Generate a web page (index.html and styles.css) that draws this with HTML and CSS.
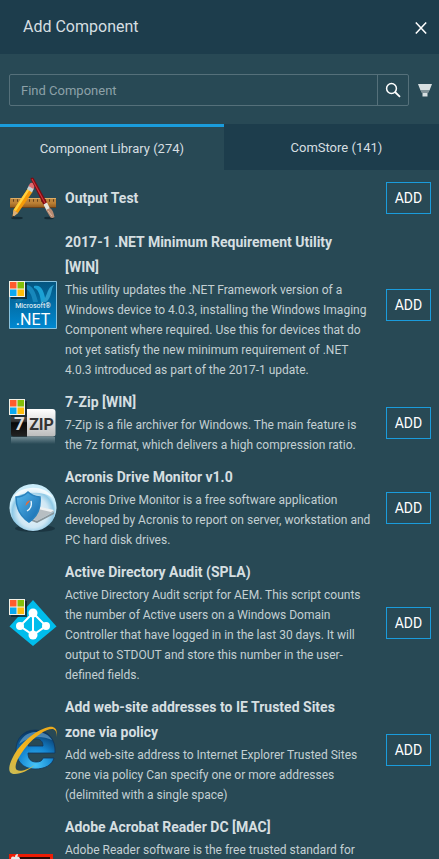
FILE: index.html
```html
<!DOCTYPE html>
<html lang="en">
<head>
<meta charset="utf-8">
<meta name="viewport" content="width=device-width, initial-scale=1">
<title>Add Component</title>
<link rel="stylesheet" href="styles.css">
</head>
<body>
<svg class="defs" aria-hidden="true">
  <defs>
    <linearGradient id="ruler" x2="0" y2="1"><stop offset="0" stop-color="#b98540"/><stop offset=".5" stop-color="#bd8136"/><stop offset="1" stop-color="#8d571b"/></linearGradient>
    <linearGradient id="net" x2="0" y2="1"><stop offset="0" stop-color="#04557f"/><stop offset="1" stop-color="#0089d2"/></linearGradient>
    <linearGradient id="zipDark" x2="0" y2="1"><stop offset="0" stop-color="#666"/><stop offset=".45" stop-color="#333"/><stop offset=".5" stop-color="#080808"/><stop offset="1" stop-color="#222"/></linearGradient>
    <linearGradient id="zipLight" x2="0" y2="1"><stop offset="0" stop-color="#fff"/><stop offset="1" stop-color="#bcbcbc"/></linearGradient>
    <linearGradient id="fade" x2="0" y2="1"><stop offset="0" stop-color="#aabdc4" stop-opacity=".55"/><stop offset="1" stop-color="#aabdc4" stop-opacity="0"/></linearGradient>
    <radialGradient id="orb" cy=".6"><stop offset="0" stop-color="#f2f9fd"/><stop offset=".65" stop-color="#cfe7f4"/><stop offset=".88" stop-color="#8fc9e6"/><stop offset="1" stop-color="#c9ecfa"/></radialGradient>
    <linearGradient id="shield" x2="1" y2="1"><stop offset="0" stop-color="#58b8ec"/><stop offset="1" stop-color="#1268ad"/></linearGradient>
    <radialGradient id="ie" cy=".9" r=".9"><stop offset="0" stop-color="#46c4f8"/><stop offset=".5" stop-color="#1587d2"/><stop offset="1" stop-color="#07325f"/></radialGradient>
    <linearGradient id="ring" x1="0" y1="1" x2="1" y2="0"><stop offset="0" stop-color="#c9bd58"/><stop offset=".4" stop-color="#f3b41e"/><stop offset="1" stop-color="#e9a81c"/></linearGradient>
    <symbol id="win" viewBox="0 0 18 18">
      <path d="M2 2h16v16H2z" fill="#10242c" opacity=".8"/>
      <path d="M0 0h16v16H0z" fill="#f4f1e6"/>
      <path d="M1 1h6.5v6.5H1z" fill="#ff5b2e"/><path d="M8.500 1H15v6.500H8.500z" fill="#83bf08"/>
      <path d="M1 8.500h6.500V15H1z" fill="#0ba8ee"/><path d="M8.500 8.500H15V15H8.500z" fill="#ffbd0a"/>
    </symbol>
  </defs>
</svg>
<main class="panel">
  <header class="panel-header">
    <h1>Add Component</h1>
    <button class="close" type="button" aria-label="Close">
      <svg width="12" height="12" viewBox="0 0 12 12" fill="none" stroke="currentColor" stroke-width="1.500"><path d="M.8.5 11.200 11.500M11.200.5.8 11.500"/></svg>
    </button>
  </header>

  <form class="search">
    <div class="search-box">
      <input type="text" placeholder="Find Component" aria-label="Find Component">
      <button type="button" aria-label="Search">
        <svg width="16" height="16" viewBox="0 0 16 16" fill="none" stroke="currentColor" stroke-width="1.500"><circle cx="6.500" cy="6.500" r="4.900"/><path d="M10 10l5 4.800" stroke-width="1.800"/></svg>
      </button>
    </div>
    <button class="filter" type="button" aria-label="Filter">
      <svg width="14" height="14" viewBox="0 0 14 14"><path d="M0 1h14l-2.500 6.500h-9z" fill="#d7dfe1"/><path d="M3 7.500h8V9l-1 1H4L3 9z" fill="#829399"/><path d="M4.500 10h5v3.500h-5z" fill="#d7dfe1"/></svg>
    </button>
  </form>

  <nav class="tabs">
    <button class="tab active" type="button">Component Library (274)</button>
    <button class="tab" type="button">ComStore (141)</button>
  </nav>

  <ul class="list">
    <li class="item">
      <svg class="icon short" viewBox="0 0 48 44" aria-hidden="true">
        <ellipse cx="8" cy="42" rx="6" ry="1.300" fill="#142b35"/><ellipse cx="40" cy="42" rx="5" ry="1.300" fill="#142b35"/>
        <path d="M1 22h46v10H1z" fill="url(#ruler)"/><path d="M2 22.500h45" stroke="#e0ad63"/><path d="M4 24.500h41" stroke="#65411b" stroke-width="2.500" stroke-dasharray="1 3"/>
        <path d="M1 31.500h46" stroke="#68401a"/>
        <path d="M18.500 13l5 3L9 37l-5.500 4 1-7z" fill="#f59a08"/><path d="M18.500 13l2 1L7 35l-2.500-1z" fill="#ffd13d"/><path d="M4.500 34L9 37l-5.500 4.500z" fill="#d9ae79"/><path d="M3.500 39.500l2 1-2.500 2z" fill="#302a28"/>
        <path d="M18 13l2-3.500 5 3-2 4z" fill="#cbd2d1"/><path d="M19.500 10l1.500-2.500c2-2 6 .5 4.500 3L24.500 13z" fill="#e06c70"/>
        <path d="M21.500 2.500l1.500-1 1.500.5L38 26.500 34.500 29z" fill="#7c0b12"/><path d="M23 3l13 24" stroke="#cc343a" stroke-width="1.200"/>
        <path d="M34.500 28.500l3.500-2 3 6-3.500 2z" fill="#e4e4de"/><path d="M37 34l4-2c3 2 3.500 5 4.500 9-2 1.500-3 1-4 .5z" fill="#b98b72"/><path d="M39 35l4 5" stroke="#ddbaa2"/>
      </svg>
      <div class="text"><h2>Output Test</h2></div>
      <button class="add" type="button">ADD</button>
    </li>
    <li class="item">
      <svg class="icon" viewBox="0 0 48 48" aria-hidden="true">
        <path d="M.5.5h47v47H.5z" fill="url(#net)" stroke="#88c2de"/>
        <path d="M16 4c6-1 10 4 13 17h-5C23 14 20 9 16 7z" fill="#1787bb"/><path d="M25 5c8-2 10 6 12 16h-5C31 13 29 8 25 7z" fill="#1ba1d4"/><path d="M45 4c-3 3-2 13-8 17h-5c7-3 5-15 13-17z" fill="#2b9cca"/><path d="M4 21c5-1 5-6 10-7l3 3c-4 1-4 4-7 4z" fill="#1477a8"/>
        <text x="24" y="27" class="net-small">Microsoft®</text>
        <text x="24" y="44" class="net-large">.NET</text>
        <use href="#win" width="18" height="18"/>
      </svg>
      <div class="text"><h2>2017-1 .NET Minimum Requirement Utility [WIN]</h2><p>This utility updates the .NET Framework version of a Windows device to 4.0.3, installing the Windows Imaging Component where required. Use this for devices that do not yet satisfy the new minimum requirement of .NET 4.0.3 introduced as part of the 2017-1 update.</p></div>
      <button class="add" type="button">ADD</button>
    </li>
    <li class="item">
      <svg class="icon" viewBox="0 0 48 48" aria-hidden="true">
        <path d="M2 38h44v7H2z" fill="url(#fade)"/>
        <path d="M18 10h-13a3 3 0 0 0-3 3v22a2.500 2.500 0 0 0 2.500 2.500H18z" fill="url(#zipDark)"/><path d="M18 10h25.500a3 3 0 0 1 3 3v22a2.500 2.500 0 0 1-2.500 2.500H18z" fill="url(#zipLight)"/>
        <text x="10.500" y="31" class="zip-seven">7</text><text x="32.500" y="30.500" class="zip-name">ZIP</text>
        <use href="#win" width="18" height="18"/>
      </svg>
      <div class="text"><h2>7-Zip [WIN]</h2><p>7-Zip is a file archiver for Windows. The main feature is the 7z format, which delivers a high compression ratio.</p></div>
      <button class="add" type="button">ADD</button>
    </li>
    <li class="item">
      <svg class="icon" viewBox="0 0 48 48" aria-hidden="true">
        <ellipse cx="26" cy="44.500" rx="20" ry="3.500" fill="#152e39" opacity=".7"/><circle cx="24" cy="23.500" r="23.500" fill="url(#orb)"/>
        <path d="M4 14C10 1 37 0 44 14c-9-7-29-7-40 0z" fill="#fff" opacity=".75"/>
        <path d="M20 33l11-9 15 3-18 10z" fill="#b7bec2"/><path d="M31 23l14 3-3 2-13-3z" fill="#eef1f2"/><path d="M20 34l8 3 17-9v2l-17 9-8-3z" fill="#89959a"/>
        <path d="M7 13c5 0 9-2 12-5 3 3 7 4.500 12 5 1 12-3 20-11 25C12 33 7 25 7 13z" fill="url(#shield)" stroke="#2982be" stroke-width="1.500"/>
        <path d="M16.500 22c0-3 1.500-5 5-6-1 2-3 4-5 6z" fill="#e76c36"/><path d="M22 17c1 4-.5 8-4 10" fill="none" stroke="#e7f5fc" stroke-width="1.400"/>
      </svg>
      <div class="text"><h2>Acronis Drive Monitor v1.0</h2><p>Acronis Drive Monitor is a free software application developed by Acronis to report on server, workstation and PC hard disk drives.</p></div>
      <button class="add" type="button">ADD</button>
    </li>
    <li class="item">
      <svg class="icon" viewBox="0 0 48 48" aria-hidden="true">
        <path d="M24 1l23.500 26.500L24 47 .5 27.500z" fill="#00bdec"/>
        <path d="M24 14L11 27l13 9 13-9zM24 14v22" fill="none" stroke="#fff" stroke-width="2"/>
        <circle cx="24" cy="14" r="4.500" fill="#fff"/><circle cx="11" cy="27" r="4" fill="#fff"/><circle cx="37" cy="27" r="4" fill="#fff"/><circle cx="24" cy="36" r="4.500" fill="#fff"/>
        <use href="#win" width="18" height="18"/>
      </svg>
      <div class="text"><h2>Active Directory Audit (SPLA)</h2><p>Active Directory Audit script for AEM. This script counts the number of Active users on a Windows Domain Controller that have logged in in the last 30 days. It will output to STDOUT and store this number in the user-defined fields.</p></div>
      <button class="add" type="button">ADD</button>
    </li>
    <li class="item">
      <svg class="icon" viewBox="0 0 48 48" aria-hidden="true">
        <path fill-rule="evenodd" d="M46 27H19c0 6 3 9 8 9 4 0 6-1 7-4h11c-2 7-9 11-19 11C14 43 7 35 7 24S14 4 26 4c13 0 21 9 20 23zM19 20h15c0-5-3-7-7-7s-7 2-8 7z" fill="url(#ie)" stroke="#12365a" stroke-width=".8"/>
        <path d="M10 18C14 8 22 6 27 6c8 0 13 3 16 8-11-5-23-4-33 4z" fill="#7db5d8" opacity=".55"/>
        <path d="M47 11C49 5 47 0 40 1 29 3 13 15 5 29-1 40-2 48 6 48c6 0 14-4 20-9-8 5-15 7-18 5-4-3 1-13 9-23C26 10 37 3 43 3c4 0 5 4 4 8z" fill="url(#ring)"/>
      </svg>
      <div class="text"><h2>Add web-site addresses to IE Trusted Sites zone via policy</h2><p>Add web-site address to Internet Explorer Trusted Sites zone via policy Can specify one or more addresses (delimited with a single space)</p></div>
      <button class="add" type="button">ADD</button>
    </li>
    <li class="item tall">
      <svg class="icon" viewBox="0 0 48 48" aria-hidden="true">
        <path d="M0 0h44v48H0z" fill="#ed1c05"/><path d="M10 3h31v42H3V10z" fill="#260807"/><path d="M2 5c0-3 2-3 4-2 0-2 1-3 3-3 0 2-1 3-2 3 2-1 4 0 4 2-2 2-1 4 0 5-2 5-8 4-9-5z" fill="#e8eaea"/>
      </svg>
      <div class="text"><h2>Adobe Acrobat Reader DC [MAC]</h2><p>Adobe Reader software is the free trusted standard for</p></div>
      <button class="add" type="button">ADD</button>
    </li>
  </ul>
</main>
</body>
</html>
```

FILE: styles.css
```css
* { box-sizing: border-box; }
body { margin: 0; background: #284955; color: #d6dfe1; font-family: Roboto, "Liberation Sans", sans-serif; }
h1, h2, p, ul { margin: 0; padding: 0; }
button, input { margin: 0; padding: 0; border: 0; border-radius: 0; background: none; color: inherit; font: inherit; }
button { cursor: pointer; }
svg { display: block; }
.defs { position: absolute; width: 0; height: 0; }
.panel { display: flex; flex-direction: column; height: 100vh; overflow: hidden; }
.panel-header { display: flex; flex: none; align-items: center; justify-content: space-between; height: 54px; padding: 0 12px 0 23px; background: #1d3d4c; }
.panel-header h1 { font-size: 16px; font-weight: 400; line-height: 24px; }
.close { display: grid; place-items: center; padding: 2px 0 0; color: #fff; }
.search { display: flex; flex: none; align-items: center; gap: 9px; padding: 20px 7px 18px 9px; }
.search-box { display: flex; flex: 1; height: 32px; border: 1px solid #55707a; border-radius: 2px; }
.search-box input { flex: 1; min-width: 0; padding: 0 11px; font-size: 13px; outline: 0; }
.search-box input::placeholder { color: #8da1a8; opacity: 1; }
.search-box button { display: grid; place-items: center; width: 31px; border-left: 1px solid #55707a; color: #fff; }
.tabs { display: grid; flex: none; grid-template-columns: 51% 49%; height: 46px; }
.tab { padding-left: 10px; background: #1d3d4c; font-size: 13px; }
.tab.active { padding-left: 0; border-top: 3px solid #1a9cdc; background: #284955; }
.list { display: flex; flex: 1; flex-direction: column; gap: 10px; min-height: 0; padding: 6px 8px 0 9px; list-style: none; overflow: hidden; }
.item { display: flex; flex: none; align-items: center; gap: 8px; min-height: 44px; }
.item.tall { min-height: 126px; }
.item.tall .text { align-self: flex-start; }
.icon { flex: none; width: 48px; height: 48px; }
.icon.short { height: 44px; }
.text { flex: 1; min-width: 0; }
.text h2 { padding-right: 10px; font-size: 14px; font-weight: 700; line-height: 25px; }
.text p { color: #c4d0d3; font-size: 12px; line-height: 20px; }
.add { flex: none; width: 45px; height: 32px; margin-left: 5px; border: 1px solid #1a9cdc; color: #fff; font-size: 14px; }
.net-small, .net-large, .zip-name { text-anchor: middle; }
.net-small { fill: #fff; font-size: 7px; }
.net-large { fill: #fff; font-size: 16px; }
.zip-seven { fill: #ddd; font-size: 19px; font-weight: 700; text-anchor: middle; }
.zip-name { fill: #333; font-size: 16px; font-weight: 700; }
```
